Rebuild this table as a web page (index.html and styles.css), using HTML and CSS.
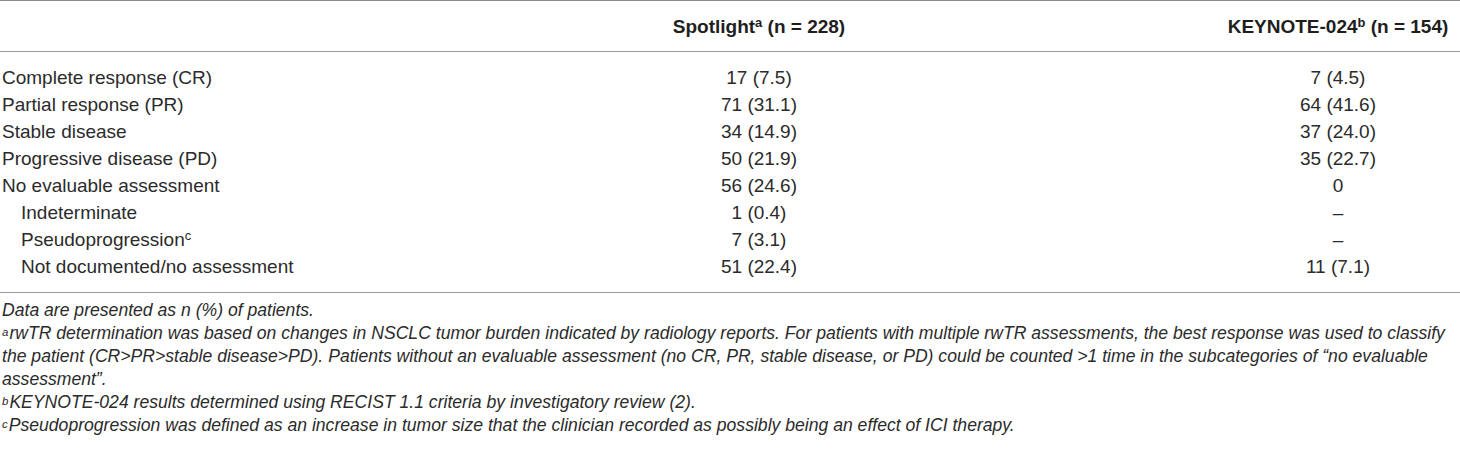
FILE: index.html
```html
<!DOCTYPE html>
<html>
<head>
  <meta charset="utf-8">
  <title>Tumor response</title>
  <link rel="stylesheet" href="styles.css">
</head>
<body>
  <div class="table-wrap">
    <table class="response-table">
      <colgroup>
        <col class="col-label">
        <col class="col-spot">
        <col class="col-key">
      </colgroup>
      <thead>
        <tr>
          <th></th>
          <th>Spotlight<sup>a</sup> (n = 228)</th>
          <th>KEYNOTE-024<sup>b</sup> (n = 154)</th>
        </tr>
      </thead>
      <tbody>
        <tr class="first">
          <td>Complete response (CR)</td>
          <td>17 (7.5)</td>
          <td>7 (4.5)</td>
        </tr>
        <tr>
          <td>Partial response (PR)</td>
          <td>71 (31.1)</td>
          <td>64 (41.6)</td>
        </tr>
        <tr>
          <td>Stable disease</td>
          <td>34 (14.9)</td>
          <td>37 (24.0)</td>
        </tr>
        <tr>
          <td>Progressive disease (PD)</td>
          <td>50 (21.9)</td>
          <td>35 (22.7)</td>
        </tr>
        <tr>
          <td>No evaluable assessment</td>
          <td>56 (24.6)</td>
          <td>0</td>
        </tr>
        <tr>
          <td class="sub">Indeterminate</td>
          <td>1 (0.4)</td>
          <td>–</td>
        </tr>
        <tr>
          <td class="sub">Pseudoprogression<sup>c</sup></td>
          <td>7 (3.1)</td>
          <td>–</td>
        </tr>
        <tr class="last">
          <td class="sub">Not documented/no assessment</td>
          <td>51 (22.4)</td>
          <td>11 (7.1)</td>
        </tr>
      </tbody>
    </table>

    <div class="notes">
      <p>Data are presented as n (%) of patients.</p>
      <p><sup>a</sup>rwTR determination was based on changes in NSCLC tumor burden indicated by radiology reports. For patients with multiple rwTR assessments, the best response was used to classify the patient (CR&gt;PR&gt;stable disease&gt;PD). Patients without an evaluable assessment (no CR, PR, stable disease, or PD) could be counted &gt;1 time in the subcategories of “no evaluable assessment”.</p>
      <p><sup>b</sup>KEYNOTE-024 results determined using RECIST 1.1 criteria by investigatory review (2).</p>
      <p><sup>c</sup>Pseudoprogression was defined as an increase in tumor size that the clinician recorded as possibly being an effect of ICI therapy.</p>
    </div>
  </div>
</body>
</html>
```

FILE: styles.css
```css
body {
  margin: 0;
  background: #fff;
  color: #2b2b2b;
  font-family: "Liberation Sans", Arial, sans-serif;
}

.table-wrap {
  width: 1460px;
}

.response-table {
  width: 1460px;
  border-collapse: collapse;
  table-layout: fixed;
  font-size: 19px;
  line-height: 27px;
}

.col-label {
  width: 302px;
}

.col-spot {
  width: 914px;
}

.col-key {
  width: 244px;
}

.response-table thead tr {
  height: 51px;
  border-top: 1px solid #8a8a8a;
  border-bottom: 1px solid #9a9a9a;
}

.response-table th {
  font-weight: bold;
  text-align: center;
  color: #1e1e1e;
  padding: 0;
  vertical-align: middle;
}

.response-table td {
  padding: 0;
  text-align: center;
}

.response-table td:first-child {
  text-align: left;
  padding-left: 2px;
}

.response-table td.sub {
  padding-left: 21px;
}

.response-table tr.first td {
  padding-top: 12px;
}

.response-table tr.last td {
  padding-bottom: 12px;
}

.response-table tbody {
  border-bottom: 1px solid #9a9a9a;
}

sup {
  font-size: 0.68em;
  line-height: 0;
  vertical-align: 0.5em;
}

.notes {
  margin-top: 6px;
  font-size: 17.6px;
  line-height: 23px;
  font-style: italic;
  padding-left: 2px;
  padding-right: 3px;
}

.notes p {
  margin: 0;
}

.notes sup {
  font-size: 0.65em;
  vertical-align: 0.28em;
  margin-right: 1px;
}
```
